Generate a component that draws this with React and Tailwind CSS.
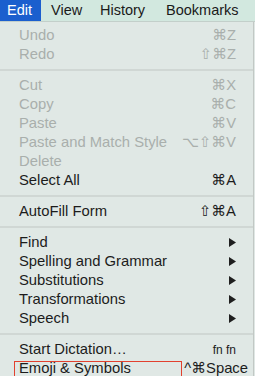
import React from "react";

const font = { fontFamily: '"Liberation Sans", "DejaVu Sans", Arial, sans-serif' };

function Arrow() {
  return (
    <svg width="7" height="9" viewBox="0 0 7 9" className="block">
      <path d="M0 0 L7 4.5 L0 9 Z" fill="#1f1f1f" />
    </svg>
  );
}

function Item({ label, sc, disabled, arrow, scClass = "", boxed }) {
  return (
    <div className="relative h-[19px] flex items-center pl-[19px] pr-[17px] text-[14.8px] leading-none">
      {boxed && (
        <div className="absolute left-[14px] top-[2px] w-[168px] h-[22px] border border-[#e2412f]" />
      )}
      <span className={disabled ? "text-[#a9afac]" : "text-[#1c1c1c]"}>{label}</span>
      <span className="flex-1" />
      {sc && (
        <span className={(disabled ? "text-[#a9afac] " : "text-[#1c1c1c] ") + scClass}>{sc}</span>
      )}
      {arrow && (
        <span>
          <Arrow />
        </span>
      )}
    </div>
  );
}

function Sep() {
  return (
    <div className="h-[12px] flex items-center">
      <div className="w-full h-[2px] bg-[#d0d7d4]" />
    </div>
  );
}

export default function App() {
  return (
    <div style={font} className="w-[255px] h-[376px] overflow-hidden bg-[#dfe7e4] relative">
      <div className="h-[22px] flex items-stretch bg-[#d2e8df] border-b border-[#c3cfca] text-[14.5px] text-[#1a1a1a]">
        <div className="w-[41px] bg-[#1b5fce] text-white flex items-center pl-[7px]">Edit</div>
        <div className="w-[59px] flex items-center pl-[10px]">View</div>
        <div className="w-[66px] flex items-center">History</div>
        <div className="flex items-center">Bookmarks</div>
      </div>
      <div className="w-[254px] border-r border-[#c2c8c5] pt-[4px] bg-[#e0e8e5] h-full">
        <Item label="Undo" sc="⌘Z" disabled />
        <Item label="Redo" sc="⇧⌘Z" disabled />
        <Sep />
        <Item label="Cut" sc="⌘X" disabled />
        <Item label="Copy" sc="⌘C" disabled />
        <Item label="Paste" sc="⌘V" disabled />
        <Item label="Paste and Match Style" sc="⌥⇧⌘V" disabled />
        <Item label="Delete" disabled />
        <Item label="Select All" sc="⌘A" />
        <Sep />
        <Item label="AutoFill Form" sc="⇧⌘A" />
        <Sep />
        <Item label="Find" arrow />
        <Item label="Spelling and Grammar" arrow />
        <Item label="Substitutions" arrow />
        <Item label="Transformations" arrow />
        <Item label="Speech" arrow />
        <Sep />
        <Item label="Start Dictation…" sc="fn fn" scClass="text-[12px]" />
        <Item label="Emoji & Symbols" sc="^⌘Space" scClass="-mr-[12px]" boxed />
      </div>
    </div>
  );
}
